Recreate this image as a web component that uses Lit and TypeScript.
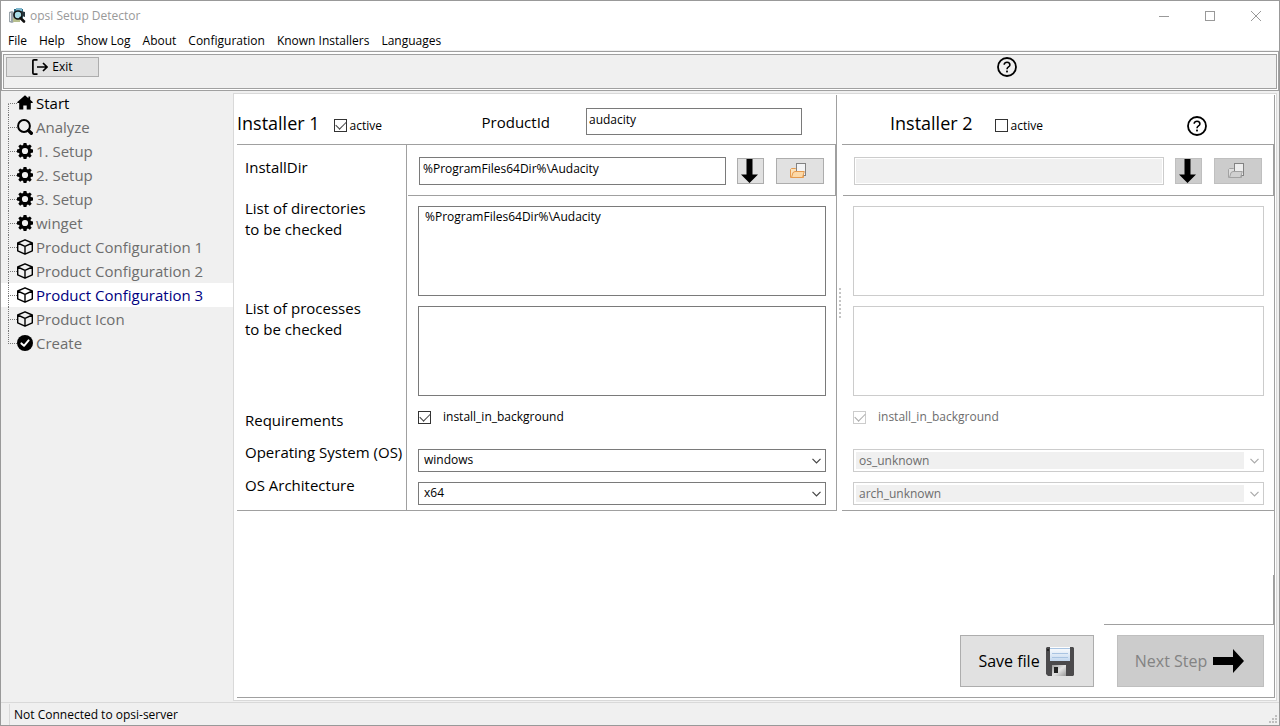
import { LitElement, html, css, svg, nothing } from "lit";
import { customElement, state } from "lit/decorators.js";

type IconName = "home" | "search" | "gear" | "box" | "check";

interface Step {
  label: string;
  icon: IconName;
  enabled?: boolean;
}

interface Installer {
  id: string;
  title: string;
  active: boolean;
  installDir: string;
  directories: string;
  processes: string;
  os: string;
  arch: string;
}

const MENU = ["File", "Help", "Show Log", "About", "Configuration", "Known Installers", "Languages"];

const STEPS: Step[] = [
  { label: "Start", icon: "home", enabled: true },
  { label: "Analyze", icon: "search" },
  { label: "1. Setup", icon: "gear" },
  { label: "2. Setup", icon: "gear" },
  { label: "3. Setup", icon: "gear" },
  { label: "winget", icon: "gear" },
  { label: "Product Configuration 1", icon: "box" },
  { label: "Product Configuration 2", icon: "box" },
  { label: "Product Configuration 3", icon: "box" },
  { label: "Product Icon", icon: "box" },
  { label: "Create", icon: "check" },
];

const GLYPHS = {
  home: svg`<path d="M8 0.3 L0.3 7 V8 H2.2 V14.6 H6.3 V10.4 H9.7 V14.6 H13.8 V8 H15.7 V7 L13.2 4.8 V1.6 H11.4 V3.3 Z"/>`,
  search: svg`<circle cx="7" cy="7" r="5.9" fill="none" stroke="#000" stroke-width="2"/><path d="M11.6 11.6 L14.3 14.3" stroke="#000" stroke-width="3.4" stroke-linecap="round"/>`,
  gear: svg`<path fill-rule="evenodd" d="M6.6 0 H9.4 L9.9 2.1 L11 2.6 L12.9 1.4 L14.7 3.2 L13.4 5 L13.9 6.1 L16 6.6 V9.4 L13.9 9.9 L13.4 11 L14.7 12.8 L12.8 14.7 L11 13.4 L9.9 13.9 L9.4 16 H6.6 L6.1 13.9 L5 13.4 L3.2 14.7 L1.3 12.8 L2.6 11 L2.1 9.9 L0 9.4 V6.6 L2.1 6.1 L2.6 5 L1.3 3.2 L3.2 1.4 L5 2.6 L6.1 2.1 Z M8 4.9 A3.1 3.1 0 1 0 8 11.1 A3.1 3.1 0 1 0 8 4.9 Z"/>`,
  box: svg`<path fill="none" stroke="#000" stroke-width="1.4" stroke-linejoin="round" d="M8 0.8 L15.3 4 V11.8 L8 15.2 L0.7 11.8 V4 Z M0.7 4 L8 7.3 L15.3 4 M8 7.3 V15.2"/>`,
  check: svg`<circle cx="8" cy="8" r="8"/><path fill="none" stroke="#fff" stroke-width="2" stroke-linecap="round" stroke-linejoin="round" d="M4.4 8.4 L7 10.8 L11.6 5.4"/>`,
};

const helpIcon = html`<svg width="20" height="20" viewBox="0 0 20 20" aria-hidden="true">
  <circle cx="10" cy="10" r="9" fill="none" stroke="#000" stroke-width="1.8" />
  <path d="M7.2 7.8 C7.2 4.4 12.9 4.5 12.9 7.9 C12.9 9.9 10 10 10 12.2" fill="none" stroke="#000" stroke-width="1.6" />
  <rect x="9.1" y="13.6" width="1.8" height="1.8" />
</svg>`;

const downIcon = html`<svg width="17" height="24" viewBox="0 0 17 24" aria-hidden="true">
  <path d="M5.5 0 H11.5 V15.5 H17 L8.5 24 L0 15.5 H5.5 Z" />
</svg>`;

const folderIcon = (enabled: boolean) => {
  const edge = enabled ? "#e59a4e" : "#a2a2a2";
  return html`<svg width="16" height="16" viewBox="0 0 16 16" aria-hidden="true">
    <path d="M0.5 14.5 V6.5 L1.5 5.5 H5.5 L6.5 6.5 H13.5 V14.5 Z" fill=${enabled ? "#fbe3bd" : "#dedede"} stroke=${edge} />
    <rect x="6.5" y="0.5" width="9" height="12" fill=${enabled ? "#f3f4f5" : "#ededed"} stroke="#828282" />
    <path d="M1.5 14.5 L3 9.5 L5 8.5 H14.3 L12.5 14.5 Z" fill=${enabled ? "#fcd9a8" : "#d0d0d0"} stroke=${edge} />
  </svg>`;
};

@customElement("app-root")
export class AppRoot extends LitElement {
  @state() private current = 8;

  private installers: Installer[] = [
    {
      id: "one",
      title: "Installer 1",
      active: true,
      installDir: "%ProgramFiles64Dir%\\Audacity",
      directories: "%ProgramFiles64Dir%\\Audacity",
      processes: "",
      os: "windows",
      arch: "x64",
    },
    {
      id: "two",
      title: "Installer 2",
      active: false,
      installDir: "",
      directories: "",
      processes: "",
      os: "os_unknown",
      arch: "arch_unknown",
    },
  ];

  static styles = css`
    :host {
      --line: #a0a0a0;
      --soft: #d9d9d9;
      --face: #f0f0f0;
      display: flex;
      flex-direction: column;
      box-sizing: border-box;
      min-height: 100vh;
      border: 1px solid #999;
      background: var(--face);
      color: #000;
      font: 12px/16px "Open Sans", "Noto Sans", sans-serif;
    }
    * {
      box-sizing: border-box;
    }
    button,
    input,
    select,
    textarea {
      font: inherit;
      color: inherit;
      margin: 0;
      border-radius: 0;
    }
    svg {
      display: block;
      flex: none;
    }
    .plain {
      border: 0;
      padding: 0;
      background: none;
    }
    .titlebar {
      display: flex;
      align-items: center;
      height: 29px;
      padding-left: 8px;
      gap: 4px;
      background: #fff;
      color: #999;
    }
    .title {
      flex: 1;
      font-size: inherit;
      font-weight: normal;
      margin: 0;
    }
    .controls {
      display: flex;
    }
    .control {
      display: grid;
      place-items: center;
      width: 46px;
      height: 29px;
    }
    .menubar {
      display: flex;
      align-items: center;
      gap: 12px;
      height: 20px;
      padding: 2px 0 0 7px;
      margin-bottom: 1px;
      background: #fff;
    }
    .toolbar {
      padding: 2px 1px 1px;
      border: 1px solid var(--line);
      background: #fff;
    }
    .toolbar-inner {
      display: flex;
      align-items: flex-start;
      justify-content: space-between;
      height: 35px;
      padding: 2px 259px 0 2px;
      border: 1px solid var(--line);
      background: var(--face);
    }
    .push {
      display: flex;
      align-items: center;
      justify-content: center;
      padding: 0;
      border: 1px solid #adadad;
      background: #e1e1e1;
    }
    .push:disabled {
      border-color: #bfbfbf;
      background: #ccc;
      color: #838383;
    }
    .exit {
      gap: 4px;
      width: 93px;
      height: 20px;
    }
    .main {
      flex: 1;
      display: flex;
    }
    .tree {
      flex: none;
      width: 232px;
      font-size: 15px;
      line-height: 24px;
      color: #6d6d6d;
    }
    .steps {
      list-style: none;
      margin: 0;
      padding: 0;
    }
    .step {
      display: flex;
      width: 100%;
      height: 24px;
      align-items: center;
      text-align: left;
      white-space: nowrap;
    }
    .step.enabled {
      color: #000;
    }
    .step.current {
      background: #fff;
      color: #000080;
    }
    .branch {
      flex: none;
      display: flex;
      flex-direction: column;
      width: 9px;
      height: 24px;
      margin-left: 7px;
    }
    .branch::before,
    .branch::after {
      content: "";
      flex: 1;
      border-left: 1px dotted #777;
    }
    .branch::before {
      border-bottom: 1px dotted #777;
    }
    li:first-child .branch::before,
    li:last-child .branch::after {
      border-left-color: transparent;
    }
    .step-label {
      padding-left: 3px;
    }
    .sheet {
      flex: 1;
      display: flex;
      margin: 2px 2px 1px 0;
      padding: 1px 1px 2px 3px;
      border: 1px solid var(--soft);
      background: #fff;
    }
    .page {
      flex: 1;
      display: flex;
      flex-direction: column;
      border-right: 1px solid var(--line);
      border-bottom: 1px solid var(--line);
    }
    .split {
      display: flex;
    }
    .panel {
      border-bottom: 1px solid var(--line);
    }
    .panel.one {
      flex: none;
      width: 600px;
      border-right: 1px solid var(--line);
    }
    .panel.two {
      flex: 1;
    }
    .grip {
      width: 5px;
      display: grid;
      align-content: center;
      justify-content: center;
    }
    .grip::before {
      content: "";
      height: 30px;
      border-left: 2px dotted #c4c4c4;
    }
    .head {
      display: flex;
      align-items: center;
      height: 50px;
      padding-top: 8px;
      border-bottom: 1px solid var(--line);
    }
    .two .head {
      padding-left: 48px;
      padding-right: 67px;
    }
    .heading {
      margin: 0 14px 0 0;
      padding-bottom: 2px;
      font-size: 18px;
      line-height: 24px;
      font-weight: normal;
    }
    .two .heading {
      margin-right: 22px;
    }
    .help {
      padding-top: 4px;
    }
    .spacer {
      flex: 1;
    }
    .tick {
      display: flex;
      align-items: center;
      gap: 3px;
    }
    .head .tick {
      padding-top: 4px;
    }
    .box {
      appearance: none;
      flex: none;
      display: grid;
      width: 13px;
      height: 13px;
      border: 1px solid #333;
      background: #fff;
    }
    .box:checked::before {
      content: "";
      width: 9px;
      height: 5px;
      margin: 1px;
      border: solid #444;
      border-width: 0 0 1px 1px;
      transform: rotate(-45deg);
    }
    .box:disabled {
      border-color: #ccc;
    }
    .box:disabled:checked::before {
      border-color: #aaa;
    }
    .product-label {
      font-size: 15px;
      line-height: 20px;
      padding-bottom: 4px;
      margin-right: 36px;
    }
    .text {
      border: 1px solid #7a7a7a;
      background: #fff;
      outline: 0;
    }
    .text:disabled {
      border-color: #ccc;
    }
    .product {
      width: 216px;
      height: 27px;
      margin: 0 34px 4px 0;
      padding: 0 2px 5px;
    }
    .columns {
      display: flex;
    }
    .labels {
      flex: none;
      width: 170px;
      padding-left: 8px;
      border-right: 1px solid var(--line);
      font-size: 15px;
      line-height: 21px;
      white-space: nowrap;
    }
    .fields {
      flex: 1;
      min-width: 0;
    }
    .labels,
    .fields {
      display: grid;
      grid-template-rows: 51px 100px 100px 44px 33px 37px;
    }
    .labels > * {
      padding-top: 2px;
    }
    .labels > .dir-label {
      padding-top: 12px;
    }
    .labels > .req-label {
      padding-top: 14px;
    }
    .dir {
      display: flex;
      align-items: flex-start;
      gap: 11px;
      margin-left: 1px;
      padding: 12px 11px 0;
      border-right: 1px solid var(--line);
      border-bottom: 1px solid var(--line);
    }
    .dir-input {
      flex: 1;
      min-width: 0;
      height: 28px;
      padding: 0 3px 5px;
    }
    .dir-input:disabled {
      background: var(--face);
      box-shadow: inset 0 0 0 1px #fff;
    }
    .down,
    .folder {
      height: 26px;
      margin-top: 1px;
    }
    .down {
      width: 27px;
      margin-right: 1px;
      padding-right: 2px;
    }
    .folder {
      width: 48px;
      padding-right: 4px;
    }
    .cell {
      padding: 10px 10px 0 11px;
      display: grid;
    }
    .area {
      height: 90px;
      padding: 2px 6px;
      resize: none;
    }
    .req {
      align-content: start;
      padding-top: 13px;
    }
    .req .tick {
      gap: 12px;
    }
    .req .tick.off {
      color: #6d6d6d;
    }
    .combo {
      display: grid;
      align-items: center;
      height: 32px;
      padding: 9px 10px 0 11px;
    }
    .combo > * {
      grid-area: 1 / 1;
    }
    .combo svg {
      justify-self: end;
      margin-right: 5px;
      pointer-events: none;
    }
    .select {
      appearance: none;
      height: 23px;
      width: 100%;
      padding: 0 20px 1px 5px;
    }
    .select:disabled {
      opacity: 1;
      color: #6d6d6d;
      border-color: #ccc;
      background: linear-gradient(var(--face), var(--face)) content-box #fff;
      padding: 2px 19px 2px 2px;
      text-indent: 3px;
    }
    .foot {
      flex: 1;
      display: flex;
      flex-direction: column;
      align-items: flex-end;
      justify-content: flex-end;
    }
    .frame {
      width: 170px;
      height: 50px;
      border-right: 1px solid var(--line);
      border-bottom: 1px solid var(--line);
    }
    .actions {
      display: flex;
      gap: 23px;
      padding: 10px;
    }
    .big {
      height: 52px;
      padding-right: 2px;
      font-size: 16px;
    }
    .save {
      width: 134px;
      gap: 6px;
    }
    .next {
      width: 147px;
      gap: 6px;
    }
    .status {
      display: flex;
      align-items: stretch;
      justify-content: space-between;
      height: 23px;
      padding-top: 1px;
      border-top: 1px solid var(--soft);
    }
    .status-text {
      margin-left: 8px;
      padding: 3px 0 0 4px;
      border-left: 1px solid var(--soft);
    }
    .sizer {
      align-self: flex-end;
      margin: 0 2px 2px 0;
    }
  `;

  private renderStep(step: Step, index: number) {
    const here = index === this.current;
    return html`<li>
      <button
        class="plain step ${step.enabled ? "enabled" : ""} ${here ? "current" : ""}"
        aria-current=${here ? "step" : nothing}
        @click=${() => (this.current = index)}
      >
        <span class="branch"></span>
        <svg width="16" height="16" viewBox="0 0 16 16" aria-hidden="true">${GLYPHS[step.icon]}</svg>
        <span class="step-label">${step.label}</span>
      </button>
    </li>`;
  }

  private renderCombo(id: string, label: string, value: string, enabled: boolean) {
    return html`<div class="combo">
      <select class="text select" id=${id} aria-label=${label} ?disabled=${!enabled}>
        <option selected>${value}</option>
      </select>
      <svg width="9" height="6" viewBox="0 0 9 6" aria-hidden="true">
        <path d="M0.5 0.8 L4.5 4.8 L8.5 0.8" fill="none" stroke=${enabled ? "#444" : "#aaa"} stroke-width="1.2" />
      </svg>
    </div>`;
  }

  private renderFields(item: Installer) {
    const off = !item.active;
    return html`<div class="fields">
      <div class="dir">
        <input class="text dir-input" id="dir-${item.id}" aria-label="InstallDir" .value=${item.installDir} ?disabled=${off} />
        <button class="push down" aria-label="Insert directory" ?disabled=${off}>${downIcon}</button>
        <button class="push folder" aria-label="Browse" ?disabled=${off}>${folderIcon(item.active)}</button>
      </div>
      <div class="cell">
        <textarea class="text area" id="dirs-${item.id}" aria-label="List of directories to be checked" .value=${item.directories} ?disabled=${off}></textarea>
      </div>
      <div class="cell">
        <textarea class="text area" id="procs-${item.id}" aria-label="List of processes to be checked" .value=${item.processes} ?disabled=${off}></textarea>
      </div>
      <div class="cell req">
        <label class="tick ${off ? "off" : ""}">
          <input class="box" type="checkbox" checked ?disabled=${off} />install_in_background
        </label>
      </div>
      ${this.renderCombo(`os-${item.id}`, "Operating System (OS)", item.os, item.active)}
      ${this.renderCombo(`arch-${item.id}`, "OS Architecture", item.arch, item.active)}
    </div>`;
  }

  private renderTick(item: Installer) {
    return html`<label class="tick"><input class="box" type="checkbox" ?checked=${item.active} />active</label>`;
  }

  render() {
    const [one, two] = this.installers;
    return html`
      <header class="titlebar">
        <svg width="17" height="16" viewBox="0 0 17 16" aria-hidden="true">
          <path d="M0 4 L3 3 L5 4 V14 L3 15 L0 14 Z" fill="#9aa4aa" />
          <path d="M1 5 H2 V13 H1 Z" fill="#eceff0" />
          <rect x="5" y="1" width="9" height="9" fill="#2d6f86" />
          <rect x="7" y="0" width="6" height="3" fill="#7fb6cc" />
          <rect x="4" y="10" width="7" height="4" fill="#b7bf8e" />
          <circle cx="9" cy="7" r="4" fill="#a9dde6" stroke="#111" stroke-width="1.6" />
          <path d="M11.5 10 L15 13.5" stroke="#111" stroke-width="2.6" stroke-linecap="round" />
          <path d="M12 3 L16 4 V9 L13 8 Z" fill="#26343b" />
        </svg>
        <h1 class="title">opsi Setup Detector</h1>
        <div class="controls">
          <button class="plain control" aria-label="Minimize">
            <svg width="10" height="10" viewBox="0 0 10 10"><path d="M0 5.5 H10" stroke="#999" /></svg>
          </button>
          <button class="plain control" aria-label="Maximize">
            <svg width="10" height="10" viewBox="0 0 10 10"><rect x="0.5" y="0.5" width="9" height="9" fill="none" stroke="#999" /></svg>
          </button>
          <button class="plain control" aria-label="Close">
            <svg width="10" height="10" viewBox="0 0 10 10"><path d="M0 0 L10 10 M10 0 L0 10" stroke="#999" /></svg>
          </button>
        </div>
      </header>
      <nav class="menubar">${MENU.map((name) => html`<button class="plain">${name}</button>`)}</nav>
      <div class="toolbar">
        <div class="toolbar-inner">
          <button class="push exit">
            <svg width="16" height="16" viewBox="0 0 16 16" fill="none" stroke="#000" stroke-width="1.7" aria-hidden="true">
              <path d="M5.5 0.9 H2 Q0.9 0.9 0.9 2 V14 Q0.9 15.1 2 15.1 H5.5 M5 8 H15 M11 4 L15 8 L11 12" />
            </svg>
            Exit
          </button>
          <button class="plain" aria-label="Help">${helpIcon}</button>
        </div>
      </div>
      <div class="main">
        <nav class="tree">
          <ul class="steps">
            ${STEPS.map((step, index) => this.renderStep(step, index))}
          </ul>
        </nav>
        <main class="sheet">
          <div class="page">
            <div class="split">
              <section class="panel one">
                <div class="head">
                  <h2 class="heading">${one.title}</h2>
                  ${this.renderTick(one)}
                  <span class="spacer"></span>
                  <label class="product-label" for="product">ProductId</label>
                  <input class="text product" id="product" value="audacity" />
                </div>
                <div class="columns">
                  <div class="labels">
                    <label class="dir-label" for="dir-one">InstallDir</label>
                    <label for="dirs-one">List of directories<br />to be checked</label>
                    <label for="procs-one">List of processes<br />to be checked</label>
                    <span class="req-label">Requirements</span>
                    <label for="os-one">Operating System (OS)</label>
                    <label for="arch-one">OS Architecture</label>
                  </div>
                  ${this.renderFields(one)}
                </div>
              </section>
              <div class="grip"></div>
              <section class="panel two">
                <div class="head">
                  <h2 class="heading">${two.title}</h2>
                  ${this.renderTick(two)}
                  <span class="spacer"></span>
                  <button class="plain help" aria-label="Help">${helpIcon}</button>
                </div>
                <div class="columns">${this.renderFields(two)}</div>
              </section>
            </div>
            <div class="foot">
              <div class="frame"></div>
              <div class="actions">
                <button class="push big save">
                  Save file
                  <svg width="28" height="29" viewBox="0 0 28 29" aria-hidden="true">
                    <defs>
                      <linearGradient id="paper" x1="0" y1="0" x2="0" y2="1">
                        <stop offset="0" stop-color="#fff" />
                        <stop offset="1" stop-color="#c3d8ef" />
                      </linearGradient>
                      <linearGradient id="metal" x1="0" y1="0" x2="1" y2="1">
                        <stop offset="0" stop-color="#999" />
                        <stop offset="0.5" stop-color="#e4e4e4" />
                        <stop offset="1" stop-color="#999" />
                      </linearGradient>
                    </defs>
                    <path d="M1 0 H27 L28 1 V28 L27 29 H2 L0 27 V1 Z" fill="#4b4a4c" />
                    <rect x="4" y="0" width="20" height="14" fill="url(#paper)" />
                    <path d="M4 1.5 H24 M6 6.5 H22 M6 10.5 H22" stroke="#a9c4e2" />
                    <rect x="6" y="18" width="14" height="11" fill="url(#metal)" />
                    <rect x="8" y="20" width="4" height="6" fill="#222" />
                    <rect x="1" y="2" width="2" height="2" fill="#222" />
                  </svg>
                </button>
                <button class="push big next" disabled>
                  Next Step
                  <svg width="31" height="24" viewBox="0 0 31 24" aria-hidden="true">
                    <path d="M0 8 H20 V0 L31 12 L20 24 V16 H0 Z" />
                  </svg>
                </button>
              </div>
            </div>
          </div>
        </main>
      </div>
      <footer class="status">
        <span class="status-text">Not Connected to opsi-server</span>
        <svg class="sizer" width="8" height="8" viewBox="0 0 8 8" fill="#bfbfbf" aria-hidden="true">
          <path d="M6 0h2v2h-2z M3 3h2v2h-2z M6 3h2v2h-2z M0 6h2v2h-2z M3 6h2v2h-2z M6 6h2v2h-2z" />
        </svg>
      </footer>
    `;
  }
}
